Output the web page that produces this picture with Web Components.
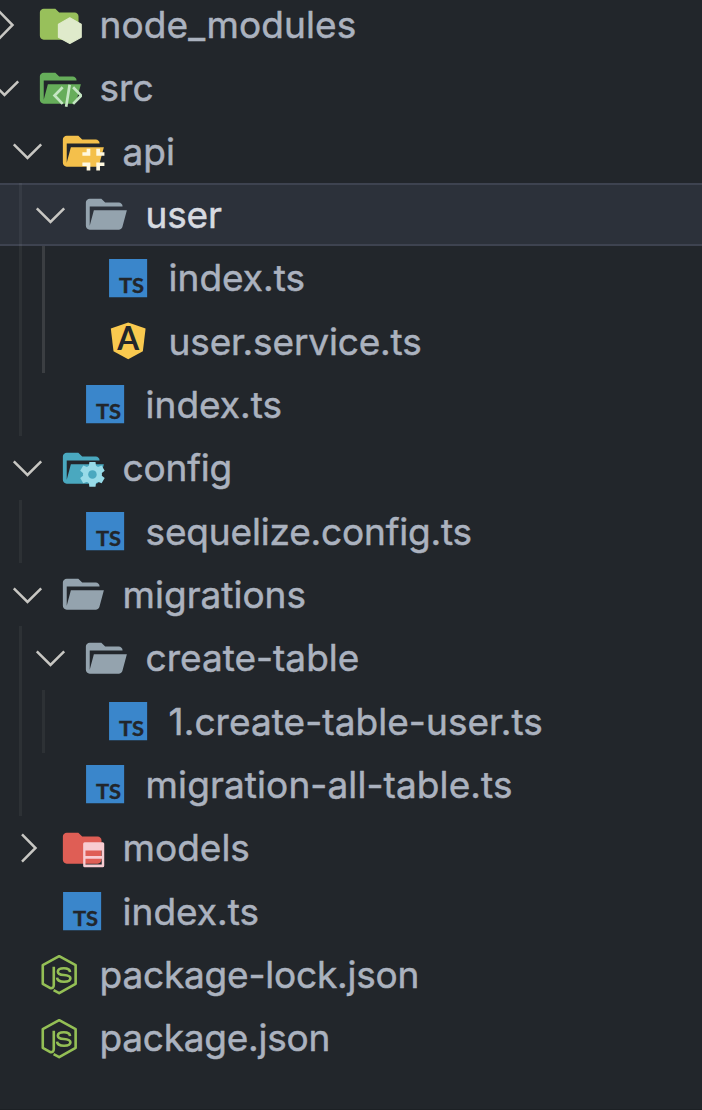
<!DOCTYPE html>
<html lang="en">
<head>
<meta charset="utf-8">
<title>Explorer</title>
<style>
  body {
    margin: 0;
    background: #22262b;
  }
</style>
</head>
<body>
<file-tree></file-tree>

<script>
const ICONS = {
  folder: `<path fill="currentColor" d="M10 4H4c-1.1 0-2 .9-2 2v12c0 1.1.9 2 2 2h16c1.1 0 2-.9 2-2V8c0-1.1-.9-2-2-2h-8z"/>`,
  open: `<path fill="currentColor" d="M19 20H4c-1.1 0-2-.9-2-2V6c0-1.1.9-2 2-2h6l2 2h7c1.1 0 2 .9 2 2H4v10l2.14-8h17.07l-2.28 8.5c-.23.87-1.01 1.5-1.93 1.5z"/>`,
  hexagon: `<path fill="#dfeacb" stroke="#dfeacb" stroke-width=".6" stroke-linejoin="round" d="M17.5 8.7l5.9 3.3v6.7l-5.9 3.3-5.900-3.300v-6.700z"/>`,
  code: `<path fill="none" stroke="#c5e6c3" stroke-width="1.4" d="M13.8 11.5l-4.2 4.3 4.2 4.3M17.4 10.2l-1.8 11.4M19.2 11.5l4.2 4.3-4.2 4.3"/>`,
  corners: `<path fill="#fff8df" d="M14.3 10.7h1.9v3.6h-4.1v-1.7h2.2zM19.3 10.7h1.9v1.9h2.3v1.7h-4.2zM12.1 17.8h4.1V22h-1.9v-2.4h-2.2zM19.3 17.8h4.2v1.8h-2.3V22h-1.9z"/>`,
  gear: `<g fill="#98dbe8" transform="translate(17.3 15.2)">
    <circle r="4.9"/>
    <path d="M-1.9-4l.3-2.4h3.2l.3 2.4v8l-.3 2.4h-3.2l-.3-2.4z"/>
    <path transform="rotate(60)" d="M-1.9-4l.3-2.4h3.2l.3 2.4v8l-.3 2.4h-3.2l-.3-2.4z"/>
    <path transform="rotate(120)" d="M-1.9-4l.3-2.4h3.2l.3 2.4v8l-.3 2.4h-3.2l-.3-2.4z"/>
    <circle r="2.2" fill="#4aa8bf"/>
  </g>`,
  table: `<path fill="#f8ccd1" fill-rule="evenodd" d="M13.3 8.9h9.3q.8 0 .8.8v11.4q0 .8-.8.8h-9.3q-.8 0-.8-.8V9.7q0-.8.8-.8zM13.7 13.2v2.8h8.4v-2.800zM13.700 17.400v3h8.400v-3z"/>`,
  ts: `<path fill="#3a86cb" d="M2.1 2.1h19.700v19.700H2.100z"/>
    <text x="7.2" y="19.6" font-family="Lato, sans-serif" font-weight="700" font-size="11" textLength="13" lengthAdjust="spacingAndGlyphs" fill="#22262b" stroke="#22262b" stroke-width=".2">TS</text>`,
  angular: `<path fill="#f9c94f" d="M12 2.300l9 3.100-1.400 11.800-7.600 4.100-7.600-4.100L3 5.400z"/>
    <text x="12" y="16.600" text-anchor="middle" font-family="Lato, sans-serif" font-weight="700" font-size="16.300" fill="#22262b">A</text>`,
  node: `<path fill="none" stroke="#94bf55" stroke-width="1.350" stroke-linejoin="round" d="M9.200 8.200v9.400q0 2-2 1.500L3.500 17V7.300L12 2.700l8.500 4.600V17L12 21.800l-2.900-1.600"/>
    <path fill="none" stroke="#94bf55" stroke-width="1.350" d="M17.600 10.900q-.1-2-3.200-2-3.100 0-3.100 1.800 0 1.500 3.100 1.700 3.400.2 3.400 1.700 0 1.800-3.300 1.800-3.500 0-3.600-2.100"/>`
};

// kind -> [layers, colour of the folder]
const KINDS = {
  'node-modules': [['folder', 'hexagon'], '#98c05b'],
  src: [['open', 'code'], '#66ad5a'],
  api: [['open', 'corners'], '#f4c04b'],
  config: [['open', 'gear'], '#4aa8bf'],
  models: [['folder', 'table'], '#df5e55'],
  plain: [['open'], '#94a3ae'],
  ts: [['ts']],
  angular: [['angular']],
  node: [['node']]
};

class FileIcon extends HTMLElement {
  constructor() {
    super();
    this.attachShadow({ mode: 'open' });
  }

  connectedCallback() {
    const [layers, color] = KINDS[this.getAttribute('kind')];
    this.shadowRoot.innerHTML = `
      <style>
        :host {
          display: block;
          flex: none;
          width: 46.4px;
          height: 46.4px;
          color: ${color || 'inherit'};
        }
        svg {
          display: block;
          width: 100%;
          height: 100%;
        }
      </style>
      <svg viewBox="0 0 24 24">${layers.map((name) => ICONS[name]).join('')}</svg>
    `;
  }
}

class TreeRow extends HTMLElement {
  constructor() {
    super();
    this.attachShadow({ mode: 'open' });
  }

  connectedCallback() {
    this.render();
  }

  render() {
    const level = Number(this.getAttribute('level'));
    const state = this.getAttribute('state');
    const active = this.hasAttribute('active-guide');
    const guides = Array.from({ length: Math.max(level - 1, 0) }, (_, i) =>
      `<i class="${active && i === level - 2 ? 'active' : ''}"></i>`).join('');
    const arrows = {
      open: 'M4.800 16.300L18.500 30 32.200 16.300',
      closed: 'M13 9.300L26.500 23 13 36.700'
    };
    this.shadowRoot.innerHTML = `
      <style>
        :host {
          display: flex;
          align-items: center;
          box-sizing: border-box;
          height: 63.3px;
          color: #abb2bf;
          font: 400 37px Inter, sans-serif;
          white-space: nowrap;
        }
        :host([selected]) {
          background: #2c313a;
          box-shadow: inset 0 2px #3e4350, inset 0 -2px #3e4350;
          color: #d7dae0;
        }
        .guides {
          display: flex;
          flex: none;
          align-self: stretch;
          box-sizing: border-box;
          width: ${level * 23}px;
          padding-left: 19px;
          gap: 20px;
        }
        .guides:empty {
          padding: 0;
        }
        i {
          flex: none;
          width: 3px;
          background: rgba(255, 255, 255, 0.05);
        }
        i.active {
          background: #3b3e42;
        }
        .twisty {
          flex: none;
          width: 38px;
          height: 46px;
          margin-left: -14px;
          margin-right: 12px;
          fill: none;
          stroke: #c8c7c3;
          stroke-width: 2.5;
        }
        .label {
          margin-left: 17.2px;
          letter-spacing: var(--track, 0);
          -webkit-text-stroke: 0.5px currentColor;
        }
      </style>
      <div class="guides">${guides}</div>
      <svg class="twisty" viewBox="0 0 38 46"><path d="${arrows[state] || ''}"/></svg>
      <file-icon kind="${this.getAttribute('kind')}"></file-icon>
      <span class="label"><slot></slot></span>
    `;
  }
}

class FileTree extends HTMLElement {
  constructor() {
    super();
    this.attachShadow({ mode: 'open' });
  }

  connectedCallback() {
    this.shadowRoot.innerHTML = `
      <style>
        :host {
          display: flex;
          flex-direction: column;
          box-sizing: border-box;
          height: 1110px;
          overflow: hidden;
          border-bottom: 1px solid #1c2024;
        }
        nav {
          flex: none;
          margin-top: -7px;
        }
        tree-row {
          height: 63.34px;
        }
      </style>
      <nav>
        <tree-row level="0" kind="node-modules" state="closed" style="--track: 0.1px">node_modules</tree-row>
        <tree-row level="0" kind="src" state="open">src</tree-row>
        <tree-row level="1" kind="api" state="open">api</tree-row>
        <tree-row level="2" kind="plain" state="open" style="--track: -0.2px" selected>user</tree-row>
        <tree-row level="3" kind="ts" active-guide>index.ts</tree-row>
        <tree-row level="3" kind="angular" style="--track: -0.15px" active-guide>user.service.ts</tree-row>
        <tree-row level="2" kind="ts">index.ts</tree-row>
        <tree-row level="1" kind="config" state="open" style="--track: -0.2px">config</tree-row>
        <tree-row level="2" kind="ts" style="--track: -0.18px">sequelize.config.ts</tree-row>
        <tree-row level="1" kind="plain" state="open">migrations</tree-row>
        <tree-row level="2" kind="plain" state="open">create-table</tree-row>
        <tree-row level="3" kind="ts" style="--track: 0.06px">1.create-table-user.ts</tree-row>
        <tree-row level="2" kind="ts" style="--track: 0.1px">migration-all-table.ts</tree-row>
        <tree-row level="1" kind="models" state="closed">models</tree-row>
        <tree-row level="1" kind="ts">index.ts</tree-row>
        <tree-row level="0" kind="node" style="--track: -0.2px">package-lock.json</tree-row>
        <tree-row level="0" kind="node" style="--track: -0.25px">package.json</tree-row>
      </nav>
    `;
  }
}

customElements.define('file-icon', FileIcon);
customElements.define('tree-row', TreeRow);
customElements.define('file-tree', FileTree);
</script>
</body>
</html>
